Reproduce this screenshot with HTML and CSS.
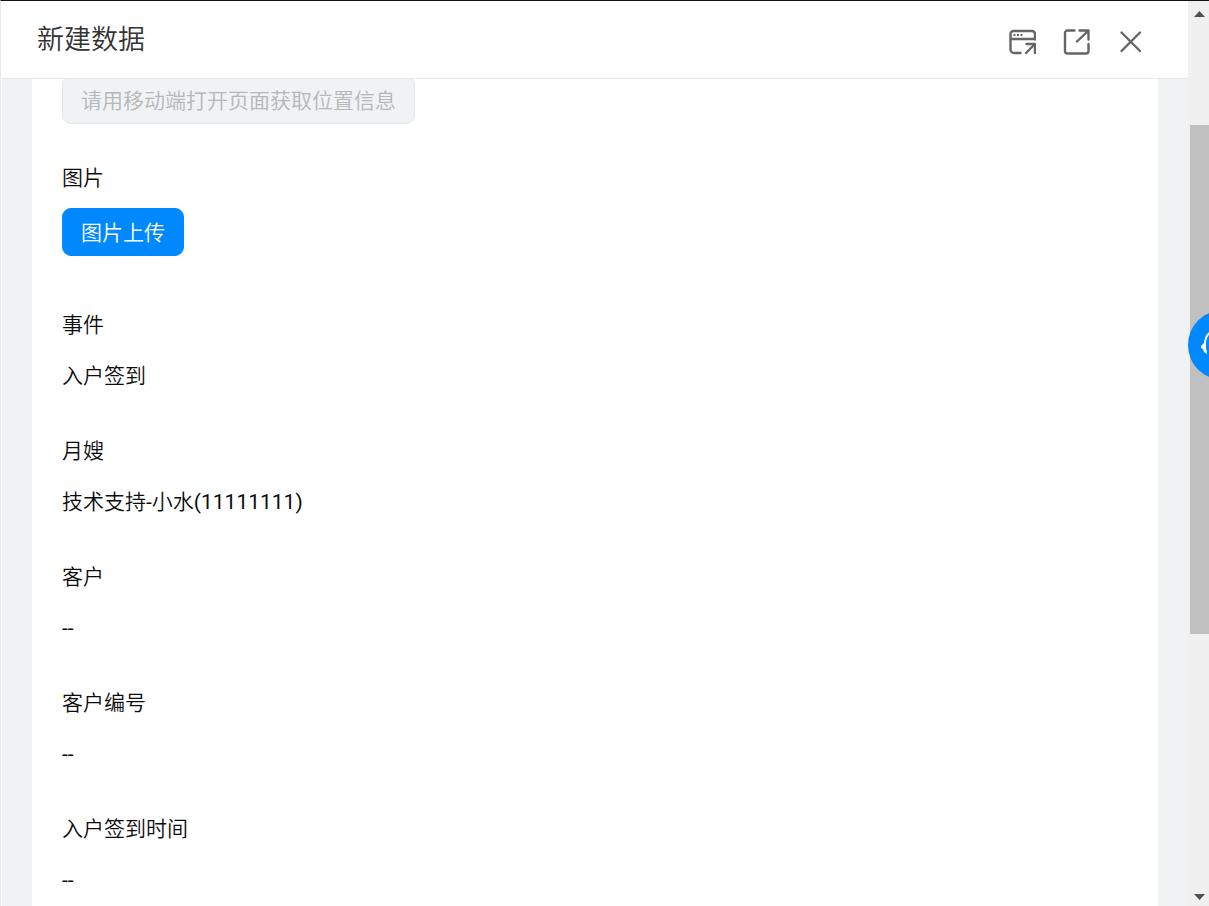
FILE: index.html
```html
<!DOCTYPE html>
<html lang="zh-CN">
<head>
    <meta charset="UTF-8">
    <meta name="viewport" content="width=device-width, initial-scale=1.0">
    <title>新建数据</title>
    <link rel="stylesheet" href="styles.css">
</head>
<body>
    <div class="dialog">
        <div class="main">
            <header class="header">
                <h1>新建数据</h1>
                <div class="actions">
                    <button type="button" class="icon-btn" aria-label="窗口模式">
                        <svg width="28" height="28" viewBox="0 0 28 28">
                            <path d="M12.500 25H6A3.500 3.500 0 0 1 2.500 21.500V6A3 3 0 0 1 5.500 3H24A3 3 0 0 1 27 6V11.500M2.500 11H27"/>
                            <path d="M18 25L26.500 16.500M18.500 16H27V25"/>
                            <path class="dots" d="M5.500 7h2M9 7h2M12.500 7h2"/>
                        </svg>
                    </button>
                    <button type="button" class="icon-btn" aria-label="新页面打开">
                        <svg width="28" height="28" viewBox="0 0 28 28">
                            <path d="M12.500 2.500H5.500A2.500 2.500 0 0 0 3 5V23A2.500 2.500 0 0 0 5.500 25.500H24A2.500 2.500 0 0 0 26.500 23V16"/>
                            <path d="M15 13.500L26 3M17.500 2.500H26.500V11.500"/>
                        </svg>
                    </button>
                    <button type="button" class="icon-btn" aria-label="关闭">
                        <svg width="28" height="28" viewBox="0 0 28 28">
                            <path d="M5.500 4.500L24 23M24 4.500L5.500 23"/>
                        </svg>
                    </button>
                </div>
            </header>

            <main class="content">
                <form class="form">
                    <button type="button" class="btn btn-location" disabled>请用移动端打开页面获取位置信息</button>

                    <div class="upload">
                        <div class="label">图片</div>
                        <button type="button" class="btn btn-primary">图片上传</button>
                    </div>

                    <dl class="fields">
                        <div class="field">
                            <dt>事件</dt>
                            <dd>入户签到</dd>
                        </div>
                        <div class="field">
                            <dt>月嫂</dt>
                            <dd>技术支持<span class="latin">-</span>小水<span class="latin">(11111111)</span></dd>
                        </div>
                        <div class="field">
                            <dt>客户</dt>
                            <dd class="latin">--</dd>
                        </div>
                        <div class="field">
                            <dt>客户编号</dt>
                            <dd class="latin">--</dd>
                        </div>
                        <div class="field">
                            <dt>入户签到时间</dt>
                            <dd class="latin">--</dd>
                        </div>
                    </dl>
                </form>
            </main>
        </div>

        <div class="scrollbar" aria-hidden="true">
            <svg class="arrow" width="11" height="6" viewBox="0 0 11 6"><path d="M0 6L5.500 0L11 6z"/></svg>
            <div class="track">
                <div class="thumb"></div>
            </div>
            <svg class="arrow" width="11" height="6" viewBox="0 0 11 6"><path d="M0 0H11L5.500 6z"/></svg>
        </div>
    </div>

    <button type="button" class="service" aria-label="客服">
        <svg width="44" height="44" viewBox="0 0 44 44">
            <path class="band" d="M4 21C4 12 10 6 22 6S40 12 40 21"/>
            <path class="cups" d="M3 20L0 23V25L2 26L3 29L6 31V28L5 26L5 20zM41 20L44 23V25L42 26L41 29L38 31V28L39 26L39 20z"/>
        </svg>
    </button>
</body>
</html>
```

FILE: styles.css
```css
* {
    box-sizing: border-box;
}
body {
    margin: 0;
    font-family: Roboto, "Noto Sans CJK SC", sans-serif;
    font-size: 21px;
    font-weight: 350;
    line-height: 30px;
    color: #0c0c0c;
    background: #fff;
    overflow: hidden;
}
.dialog {
    display: flex;
    height: 100vh;
    border-top: 1px solid #141218;
    border-left: 1px solid #e6e8ec;
}
.main {
    flex: 1;
    display: flex;
    flex-direction: column;
    min-width: 0;
    padding-left: 1px;
}

/* header */
.header {
    flex: none;
    display: flex;
    align-items: center;
    justify-content: space-between;
    height: 78px;
    padding: 0 44px 0 35px;
    border-bottom: 1px solid #e4e8eb;
}
h1 {
    margin: 0;
    font-size: 27px;
    font-weight: 350;
    line-height: 40px;
    color: #333;
}
.actions {
    display: flex;
    gap: 26px;
    padding-top: 4px;
}
.icon-btn {
    display: flex;
    padding: 0;
    border: none;
    background: none;
    cursor: pointer;
}
.icon-btn svg {
    fill: none;
    stroke: #666;
    stroke-width: 2.4;
    stroke-linecap: round;
    stroke-linejoin: round;
}
.icon-btn .dots {
    stroke-width: 1.8;
    stroke-linecap: butt;
}

/* form */
.content {
    flex: 1;
    min-height: 0;
    padding: 0 30px;
    background: #f0f2f4;
    overflow: hidden;
}
.form {
    min-height: 100%;
    padding: 0 30px;
    background: #fff;
    display: flow-root;
}
.btn {
    display: block;
    height: 48px;
    padding: 1px 18px 0;
    border: 1px solid transparent;
    border-radius: 9px;
    font-family: inherit;
    font-size: 21px;
    font-weight: inherit;
    line-height: 30px;
}
.btn-location {
    margin-top: -3px;
    color: #b5b7b9;
    background: #f0f2f4;
    border-color: #e4e6e8;
}
.btn-primary {
    color: #fff;
    background: #0089ff;
    border-color: #0089ff;
    cursor: pointer;
}
.upload {
    display: grid;
    justify-items: start;
    gap: 15px;
    margin-top: 39px;
}
.fields {
    display: grid;
    gap: 45px;
    margin: 54px 0 0;
}
.field {
    display: grid;
    gap: 21px;
}
dd {
    margin: 0;
}
.latin {
    font-weight: 400;
}

/* scrollbar */
.scrollbar {
    flex: none;
    display: flex;
    flex-direction: column;
    align-items: center;
    width: 21px;
    padding: 10px 0 6px 2px;
    background: #f0f0f0;
}
.arrow {
    fill: #505050;
}
.track {
    flex: 1;
    align-self: stretch;
    padding: 108px 0;
}
.thumb {
    height: 77%;
    background: #c0c0c0;
}

/* floating service button */
.service {
    position: fixed;
    top: 310px;
    right: -49px;
    width: 70px;
    height: 70px;
    padding: 0;
    border: none;
    border-radius: 50%;
    background: #0089ff;
    display: flex;
    align-items: center;
    justify-content: center;
    cursor: pointer;
}
.service .band {
    fill: none;
    stroke: #fff;
    stroke-width: 2;
}
.service .cups {
    fill: #fff;
}
```
